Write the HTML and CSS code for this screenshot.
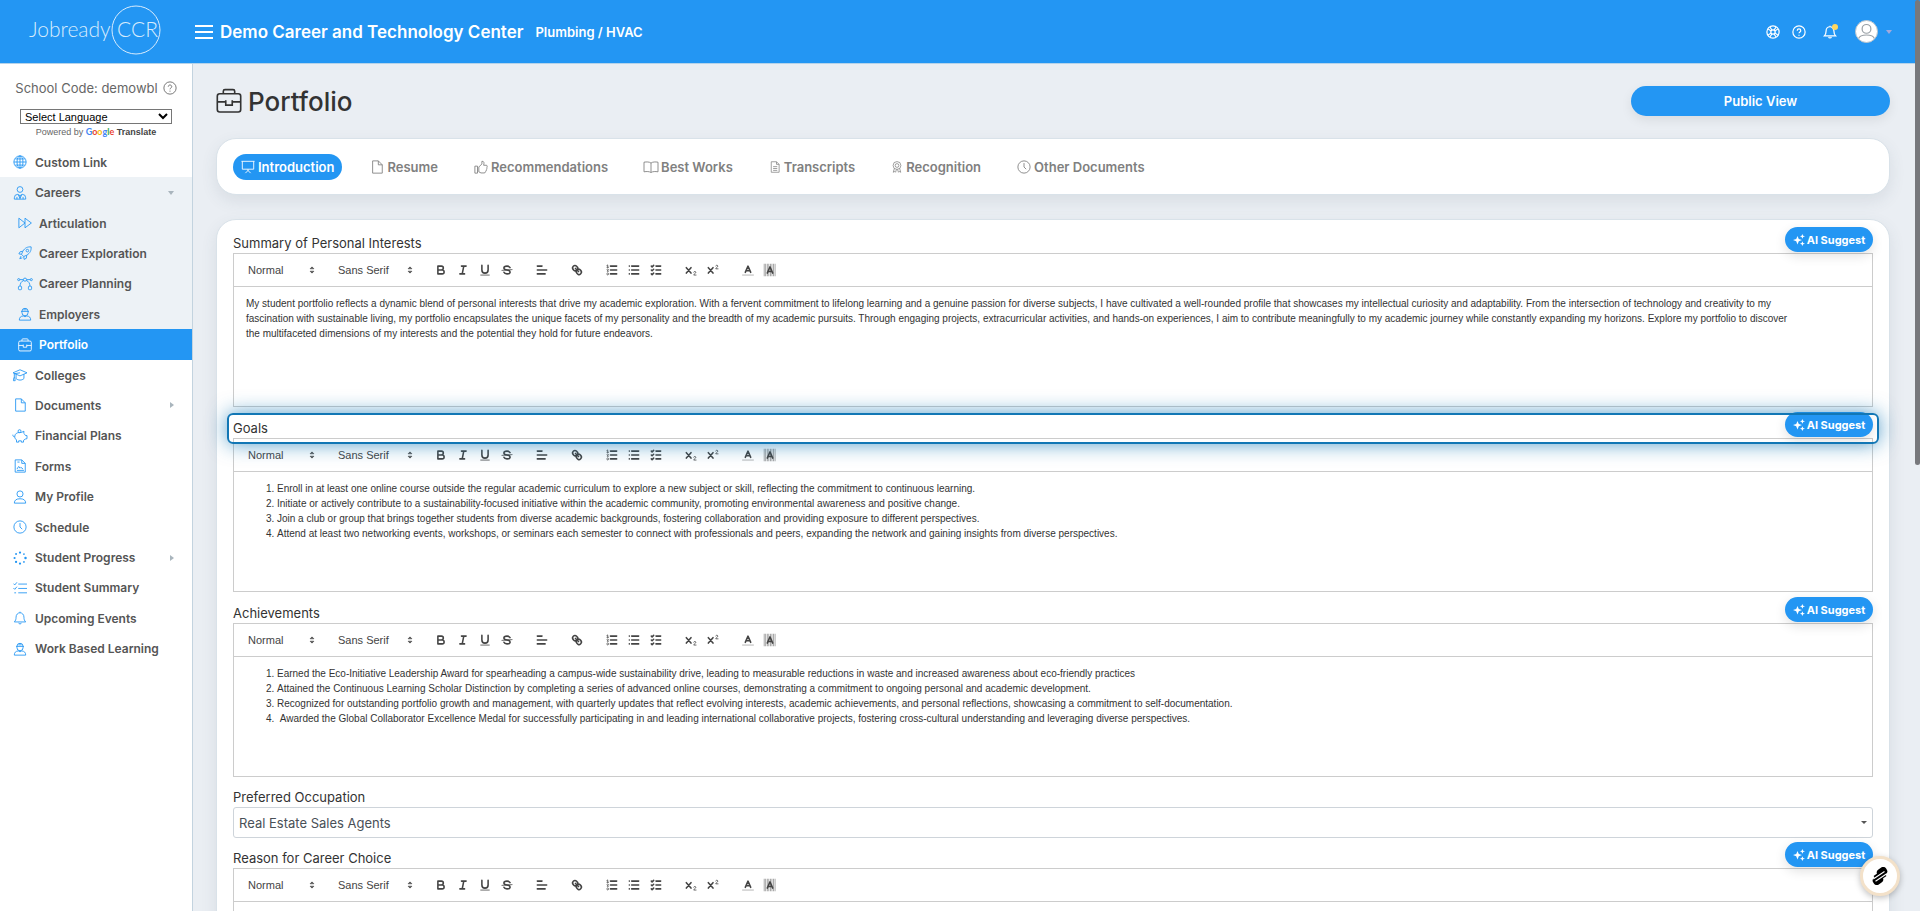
FILE: index.html
```
<!DOCTYPE html>
<html lang="en">
<head>
  <meta charset="utf-8">
  <title>Portfolio - JobreadyCCR</title>
  <link rel="stylesheet" href="styles.css">
</head>
<body>

<!-- icon sprite -->
<svg class="sprite" aria-hidden="true">
  <symbol id="i-globe" viewBox="0 0 16 16"><circle cx="8" cy="8" r="7"/><ellipse cx="8" cy="8" rx="3.4" ry="7"/><path d="M1 8h14M8 1v14M2.500 4.500h11M2.500 11.500h11"/></symbol>
  <symbol id="i-career" viewBox="0 0 16 16"><circle cx="8" cy="4" r="3.3"/><path d="M1.5 15v-1.5a4 4 0 0 1 4-4L8 11l2.500-1.500a4 4 0 0 1 4 4V15zM6 10l2 4 2-4M4.500 12.500V15M11.500 12.500V15M8 11v4"/></symbol>
  <symbol id="i-forward" viewBox="0 0 16 16"><path d="M1 2.500 8 8l-7 5.500zM8 2.500 15.300 8 8 13.500z"/></symbol>
  <symbol id="i-rocket" viewBox="0 0 16 16"><path d="M15 1c-4-.3-7 1-9.500 5L4 9.500 6.500 12l3.500-1.500C14 8 15.300 5 15 1zM5.500 6 2.500 6.500 1 9l3 .5M10 10.500 9.500 14 7 15.300 6.500 12M3.500 11.500l-1.500 3 3-1"/><circle cx="10.700" cy="5.300" r="1.500"/></symbol>
  <symbol id="i-curve" viewBox="0 0 18 16"><circle cx="1.800" cy="3" r="1.200"/><circle cx="16.200" cy="3" r="1.200"/><circle cx="9" cy="3" r="1.800"/><path d="M3 3h4M11 3h4M7.500 4C4.500 5 3.500 7.500 3.300 10.500M10.500 4c3 1 4 3.500 4.200 6.500"/><rect x="1.500" y="10.500" width="3.600" height="4" rx="1"/><rect x="12.900" y="10.500" width="3.600" height="4" rx="1"/></symbol>
  <symbol id="i-worker" viewBox="0 0 16 16"><path d="M3.500 5h9M4.500 5a3.500 3.500 0 0 1 7 0v1.500a3.500 3.500 0 0 1-7 0zM7 1.500V4M9 1.500V4M1.500 15c0-3 1.500-4.500 4.500-4.800l2 1 2-1c3 .3 4.500 1.800 4.500 4.800z"/></symbol>
  <symbol id="i-briefcase" viewBox="0 0 16 16"><rect x=".8" y="3.500" width="14.400" height="11.300" rx="1.500"/><path d="M4.500 3.500V2A1 1 0 0 1 5.500 1h5a1 1 0 0 1 1 1v1.500M.8 8.500H6M10 8.500h5.200M6 7.500v3h4v-3"/></symbol>
  <symbol id="i-grad" viewBox="0 0 18 16"><path d="M1 5.500 9 2l8 3.500L9 9zM4.500 7v5c2 2.400 7 2.400 9 0V7M9 5.500 2.500 6.500V11M1.500 14.500l.5-3.500h1l.5 3.500z"/></symbol>
  <symbol id="i-file" viewBox="0 0 16 16"><path d="M3 1h6.500L14 5.500V15H3zM9.500 1v4.500H14"/></symbol>
  <symbol id="i-pig" viewBox="0 0 18 16"><path d="M3.500 6.500C5 4 7.500 3.800 10.500 4L13.500 2.500l-.2 2.500c1 .8 1.500 1.500 2 2.500H17v3.500l-2 .5-2 1.500v2h-2.500V13.500h-3V15H5v-2.500C3 11 2.500 9 3.500 6.500zM3 9C1.500 9 .8 8 .8 6.500"/><circle cx="8.500" cy="2.500" r="1.700"/></symbol>
  <symbol id="i-form" viewBox="0 0 16 16"><path d="M2.500 1h7.500L14 5v10H2.500zM10 1v4h4M5 3.500h2.500M4.500 11.500l2-3 1.500 2 1-1 2.500 2M4.500 13h8"/></symbol>
  <symbol id="i-user" viewBox="0 0 16 16"><circle cx="8" cy="4.500" r="3.500"/><path d="M1.500 15c0-3.500 2.500-5 6.500-5s6.500 1.500 6.500 5z"/></symbol>
  <symbol id="i-clock" viewBox="0 0 16 16"><circle cx="8" cy="8" r="7"/><path d="M8 3.500V8l2.500 2.500"/></symbol>
  <symbol id="i-dots" viewBox="0 0 16 16"><g fill="currentColor" stroke="none"><circle cx="8" cy="1.800" r="1.300"/><circle cx="12.500" cy="3.500" r="1"/><circle cx="14.300" cy="8" r="1.400"/><circle cx="12.500" cy="12.500" r="1"/><circle cx="8" cy="14.300" r="1.300"/><circle cx="3.500" cy="12.500" r="1.300"/><circle cx="1.800" cy="8" r="1.200"/><circle cx="3.500" cy="3.500" r="1.100"/></g></symbol>
  <symbol id="i-tasks" viewBox="0 0 16 16"><path d="M6 3.500h10M6 8.500h10M6 13.500h10M.5 3 2 4.500 4.500 1.500M.5 8 2 9.500 4.500 6.500M1.500 13.500h2"/></symbol>
  <symbol id="i-bell" viewBox="0 0 16 16"><path d="M1.500 12.500C3 11 3.500 9.500 3.500 7a4.500 5 0 0 1 9 0c0 2.500.5 4 2 5.500zM6.500 13.500c.3 1.800 2.700 1.800 3 0M8 2V.8"/></symbol>
  <symbol id="i-help" viewBox="0 0 16 16"><circle cx="8" cy="8" r="7"/><path d="M6 6.500c0-2.600 4-2.600 4 0C10 8 8 7.800 8 9.500M8 11v1.200"/></symbol>
  <symbol id="i-ring" viewBox="0 0 16 16"><circle cx="8" cy="8" r="7"/><circle cx="8" cy="8" r="2.500"/><path d="M2.500 4.500 6 7M4.500 2.500 7 6M13.500 4.500 10 7M11.500 2.500 9 6M2.500 11.500 6 9M4.500 13.500 7 10M13.500 11.500 10 9M11.500 13.500 9 10"/></symbol>
  <symbol id="i-board" viewBox="0 0 16 16"><path d="M.5 1.500h15M1.500 1.500v9h13v-9M8 10.500v2M8 12l-3 3M8 12l3 3"/></symbol>
  <symbol id="i-thumb" viewBox="0 0 16 16"><path d="M1 7h3v8H1zM5.500 8 9 4.500V1.500C11.500 1 11.800 3.500 11 6h3.500c1 1.500.5 2.500 0 3 .5 1 0 2-.5 2.300.2 1-.2 1.800-.8 2 0 1-.7 1.500-1.700 1.500H8L5.500 13.500z"/></symbol>
  <symbol id="i-book" viewBox="0 0 18 16"><path d="M9 3.500C7 2 4 2 1 2.500V13.500C4 13 7 13 9 14.300c2-1.300 5-1.300 8-.8V2.500C14 2 11 2 9 3.500zV14"/></symbol>
  <symbol id="i-doc" viewBox="0 0 16 16"><path d="M3 1h7l3.500 3.500V15H3zM10 1v3.500h3.500M5.500 7.500h5.500M5.500 10h5.500M5.500 12.500h5.500"/></symbol>
  <symbol id="i-badge" viewBox="0 0 16 16"><circle cx="8" cy="6" r="5.200"/><circle cx="8" cy="6" r="2.500"/><path d="M4.500 10 3 15l2-1 1 1 1.300-3.800M11.500 10l1.500 5-2-1-1 1-1.300-3.800"/></symbol>
  <symbol id="i-spark" viewBox="0 0 16 16"><path fill="currentColor" stroke="none" d="M6 2.500l1.700 4L12 8l-4.300 1.700L6 14 4.300 9.700 0 8l4.300-1.500zM12.500 0l1 2.200 2.500.8-2.500.9-1 2.400-1-2.400L9.300 3l2.200-.8zM12.500 9.700l1 2.300 2.500.9-2.500.8-1 2.300-1-2.300-2.200-.8 2.200-.9z"/></symbol>

  <!-- editor toolbar -->
  <symbol id="e-updown" viewBox="0 0 18 18"><path fill="currentColor" d="M7 11l2 2 2-2zM7 7l2-2 2 2z"/></symbol>
  <symbol id="e-bold" viewBox="0 0 18 18"><path d="M5 4h4.500a2.500 2.500 0 0 1 0 5H5zM5 9h5.500a2.500 2.500 0 0 1 0 5H5z"/></symbol>
  <symbol id="e-italic" viewBox="0 0 18 18"><path d="M7 4h6M5 14h6M8 14l2-10"/></symbol>
  <symbol id="e-under" viewBox="0 0 18 18"><path d="M5 3v6a4 4 0 0 0 8 0V3"/><rect x="3" y="15" width="12" height="1" fill="currentColor" stroke="none"/></symbol>
  <symbol id="e-strike" viewBox="0 0 18 18"><path stroke-width="1" d="M15.500 8.500l-13 1"/><path d="M12.900 6C12.400 4.900 11 4 9 4 6.800 4 5 5.100 5 6.500 5 8 6.500 8.800 9 9s4 1 4 2.500S11.200 14 9 14s-3.500-.9-3.900-2"/></symbol>
  <symbol id="e-align" viewBox="0 0 18 18"><path d="M3 9h12M3 14h10M3 4h6"/></symbol>
  <symbol id="e-link" viewBox="0 0 18 18"><path d="M7 7l4 4M8.900 4.577a3.476 3.476 0 0 1 .36 4.679A3.476 3.476 0 0 1 4.577 8.900C3.185 7.500 2.035 6.400 4.217 4.217S7.500 3.185 8.900 4.577zM13.423 9.100a3.476 3.476 0 0 0-4.679-.36 3.476 3.476 0 0 0 .36 4.679c1.392 1.392 2.500 2.542 4.679.36S14.815 10.500 13.423 9.100z"/></symbol>
  <symbol id="e-ol" viewBox="0 0 18 18"><path d="M7 4h8M7 9h8M7 14h8"/><path stroke-width="1" d="M2.500 3l1-.5v3M2.500 5.500h2M4.500 10.500h-2c0-.2 1.850-1.100 1.850-2.200a1 1 0 0 0-1.850-.1M2.500 14.800a1 1 0 0 0 1.850-.1c0-.4-.3-.7-.6-.7.3 0 .6-.3.600-.7a1 1 0 0 0-1.850-.1"/></symbol>
  <symbol id="e-ul" viewBox="0 0 18 18"><path d="M6 4h9M6 9h9M6 14h9M3 4h.01M3 9h.01M3 14h.01"/></symbol>
  <symbol id="e-check" viewBox="0 0 18 18"><path d="M9 4h6M9 9h6M9 14h6M3 4l1 1 2-2M3 9l1 1 2-2M3 14l1 1 2-2"/></symbol>
  <symbol id="e-sub" viewBox="0 0 18 18"><path d="M3 6l6 7M9 6l-6 7"/><path stroke-width="1" d="M12.500 11.800c.2-1.400 2.700-1.300 2.700.2 0 1.600-2.700 2-2.700 3.500h3"/></symbol>
  <symbol id="e-sup" viewBox="0 0 18 18"><path d="M3 6l6 7M9 6l-6 7"/><path stroke-width="1" d="M12.500 3.800c.2-1.400 2.700-1.300 2.700.2 0 1.600-2.700 2-2.700 3.500h3"/></symbol>
  <symbol id="e-color" viewBox="0 0 18 18"><path stroke-width="1" opacity=".5" d="M2 15.500h14"/><path d="M5.500 12 9 4l3.500 8M11.600 10H6.400"/></symbol>
  <symbol id="e-back" viewBox="0 0 18 18"><path stroke-width="16" stroke-linecap="butt" stroke-dasharray="1 1" opacity=".6" d="M1 9h16"/><path d="M5.500 13 9 5l3.500 8M11.600 11H6.400"/></symbol>
</svg>

<header class="topbar">
  <a class="logo" href="#" aria-label="JobreadyCCR">
    <svg width="140" height="56" viewBox="0 0 140 56">
      <text x="4" y="33">Jobready</text>
      <circle cx="111" cy="26" r="24"/>
      <text x="92" y="33">CCR</text>
    </svg>
  </a>
  <button class="burger" type="button" aria-label="Menu"><i></i><i></i><i></i></button>
  <span class="school">Demo Career and Technology Center</span>
  <span class="program">Plumbing / HVAC</span>
  <div class="tools">
    <button type="button" aria-label="Support"><svg class="icon"><use href="#i-ring"/></svg></button>
    <button type="button" aria-label="Help"><svg class="icon"><use href="#i-help"/></svg></button>
    <button class="notify" type="button" aria-label="Notifications"><svg class="icon"><use href="#i-bell"/></svg></button>
    <button class="account" type="button" aria-label="Account"><span class="avatar"><svg viewBox="0 0 24 24"><circle cx="12" cy="9" r="5"/><path d="M3 20c1-3 4-4 9-4s8 1 9 4"/></svg></span><span class="caret"></span></button>
  </div>
</header>

<div class="layout">
  <aside class="sidebar">
    <div class="code">School Code: demowbl <svg class="icon"><use href="#i-help"/></svg></div>
    <div class="translate">
      <select aria-label="Select Language"><option>Select Language</option></select>
      <p>Powered by <span class="google"><span class="g1">G</span><span class="g2">o</span><span class="g3">o</span><span class="g1">g</span><span class="g4">l</span><span class="g2">e</span></span> <a href="#">Translate</a></p>
    </div>
    <nav class="menu">
      <a href="#"><svg class="icon"><use href="#i-globe"/></svg>Custom Link</a>
      <a href="#" class="open"><svg class="icon"><use href="#i-career"/></svg>Careers<span class="arrow down"></span></a>
      <a href="#" class="open sub"><svg class="icon"><use href="#i-forward"/></svg>Articulation</a>
      <a href="#" class="open sub"><svg class="icon"><use href="#i-rocket"/></svg>Career Exploration</a>
      <a href="#" class="open sub"><svg class="icon wide"><use href="#i-curve"/></svg>Career Planning</a>
      <a href="#" class="open sub"><svg class="icon"><use href="#i-worker"/></svg>Employers</a>
      <a href="#" class="active sub"><svg class="icon"><use href="#i-briefcase"/></svg>Portfolio</a>
      <a href="#"><svg class="icon wide"><use href="#i-grad"/></svg>Colleges</a>
      <a href="#"><svg class="icon"><use href="#i-file"/></svg>Documents<span class="arrow"></span></a>
      <a href="#"><svg class="icon wide"><use href="#i-pig"/></svg>Financial Plans</a>
      <a href="#"><svg class="icon"><use href="#i-form"/></svg>Forms</a>
      <a href="#"><svg class="icon"><use href="#i-user"/></svg>My Profile</a>
      <a href="#"><svg class="icon"><use href="#i-clock"/></svg>Schedule</a>
      <a href="#"><svg class="icon"><use href="#i-dots"/></svg>Student Progress<span class="arrow"></span></a>
      <a href="#"><svg class="icon"><use href="#i-tasks"/></svg>Student Summary</a>
      <a href="#"><svg class="icon"><use href="#i-bell"/></svg>Upcoming Events</a>
      <a href="#"><svg class="icon"><use href="#i-worker"/></svg>Work Based Learning</a>
    </nav>
  </aside>

  <main class="content">
    <div class="page-head">
      <svg class="icon"><use href="#i-briefcase"/></svg>
      <h1>Portfolio</h1>
      <button class="public" type="button">Public View</button>
    </div>

    <nav class="card tabs">
      <a href="#" class="on"><svg class="icon"><use href="#i-board"/></svg>Introduction</a>
      <a href="#"><svg class="icon"><use href="#i-file"/></svg>Resume</a>
      <a href="#"><svg class="icon"><use href="#i-thumb"/></svg>Recommendations</a>
      <a href="#"><svg class="icon wide"><use href="#i-book"/></svg>Best Works</a>
      <a href="#"><svg class="icon slim"><use href="#i-doc"/></svg>Transcripts</a>
      <a href="#"><svg class="icon slim"><use href="#i-badge"/></svg>Recognition</a>
      <a href="#"><svg class="icon"><use href="#i-clock"/></svg>Other Documents</a>
    </nav>

    <div class="card form">
      <section class="field">
        <div class="field-head"><h2>Summary of Personal Interests</h2><button class="ai" type="button"><svg class="icon"><use href="#i-spark"/></svg>AI Suggest</button></div>
        <div class="toolbar">
          <span class="picker head"><select aria-label="Heading"><option>Normal</option></select><svg><use href="#e-updown"/></svg></span>
          <span class="picker font"><select aria-label="Font"><option>Sans Serif</option></select><svg><use href="#e-updown"/></svg></span>
          <span class="group"><button aria-label="Bold"><svg><use href="#e-bold"/></svg></button><button aria-label="Italic"><svg><use href="#e-italic"/></svg></button><button aria-label="Underline"><svg><use href="#e-under"/></svg></button><button aria-label="Strike"><svg><use href="#e-strike"/></svg></button></span>
          <span class="group"><button aria-label="Align"><svg><use href="#e-align"/></svg></button></span>
          <span class="group"><button aria-label="Link"><svg><use href="#e-link"/></svg></button></span>
          <span class="group"><button aria-label="Ordered list"><svg><use href="#e-ol"/></svg></button><button aria-label="Bullet list"><svg><use href="#e-ul"/></svg></button><button aria-label="Check list"><svg><use href="#e-check"/></svg></button></span>
          <span class="group"><button aria-label="Subscript"><svg><use href="#e-sub"/></svg></button><button aria-label="Superscript"><svg><use href="#e-sup"/></svg></button></span>
          <span class="group"><button aria-label="Color"><svg><use href="#e-color"/></svg></button><button aria-label="Background"><svg><use href="#e-back"/></svg></button></span>
        </div>
        <div class="editor" contenteditable="true" spellcheck="false">
          <p>My student portfolio reflects a dynamic blend of personal interests that drive my academic exploration. With a fervent commitment to lifelong learning and a genuine passion for diverse subjects, I have cultivated a well-rounded profile that showcases my intellectual curiosity and adaptability. From the intersection of technology and creativity to my<br>
          fascination with sustainable living, my portfolio encapsulates the unique facets of my personality and the breadth of my academic pursuits. Through engaging projects, extracurricular activities, and hands-on experiences, I aim to contribute meaningfully to my academic journey while constantly expanding my horizons. Explore my portfolio to discover<br>
          the multifaceted dimensions of my interests and the potential they hold for future endeavors.</p>
        </div>
      </section>

      <section class="field">
        <div class="field-head focus"><h2>Goals</h2><button class="ai" type="button"><svg class="icon"><use href="#i-spark"/></svg>AI Suggest</button></div>
        <div class="toolbar">
          <span class="picker head"><select aria-label="Heading"><option>Normal</option></select><svg><use href="#e-updown"/></svg></span>
          <span class="picker font"><select aria-label="Font"><option>Sans Serif</option></select><svg><use href="#e-updown"/></svg></span>
          <span class="group"><button aria-label="Bold"><svg><use href="#e-bold"/></svg></button><button aria-label="Italic"><svg><use href="#e-italic"/></svg></button><button aria-label="Underline"><svg><use href="#e-under"/></svg></button><button aria-label="Strike"><svg><use href="#e-strike"/></svg></button></span>
          <span class="group"><button aria-label="Align"><svg><use href="#e-align"/></svg></button></span>
          <span class="group"><button aria-label="Link"><svg><use href="#e-link"/></svg></button></span>
          <span class="group"><button aria-label="Ordered list"><svg><use href="#e-ol"/></svg></button><button aria-label="Bullet list"><svg><use href="#e-ul"/></svg></button><button aria-label="Check list"><svg><use href="#e-check"/></svg></button></span>
          <span class="group"><button aria-label="Subscript"><svg><use href="#e-sub"/></svg></button><button aria-label="Superscript"><svg><use href="#e-sup"/></svg></button></span>
          <span class="group"><button aria-label="Color"><svg><use href="#e-color"/></svg></button><button aria-label="Background"><svg><use href="#e-back"/></svg></button></span>
        </div>
        <div class="editor" contenteditable="true" spellcheck="false">
          <ol>
            <li>Enroll in at least one online course outside the regular academic curriculum to explore a new subject or skill, reflecting the commitment to continuous learning.</li>
            <li>Initiate or actively contribute to a sustainability-focused initiative within the academic community, promoting environmental awareness and positive change.</li>
            <li>Join a club or group that brings together students from diverse academic backgrounds, fostering collaboration and providing exposure to different perspectives.</li>
            <li>Attend at least two networking events, workshops, or seminars each semester to connect with professionals and peers, expanding the network and gaining insights from diverse perspectives.</li>
          </ol>
        </div>
      </section>

      <section class="field">
        <div class="field-head"><h2>Achievements</h2><button class="ai" type="button"><svg class="icon"><use href="#i-spark"/></svg>AI Suggest</button></div>
        <div class="toolbar">
          <span class="picker head"><select aria-label="Heading"><option>Normal</option></select><svg><use href="#e-updown"/></svg></span>
          <span class="picker font"><select aria-label="Font"><option>Sans Serif</option></select><svg><use href="#e-updown"/></svg></span>
          <span class="group"><button aria-label="Bold"><svg><use href="#e-bold"/></svg></button><button aria-label="Italic"><svg><use href="#e-italic"/></svg></button><button aria-label="Underline"><svg><use href="#e-under"/></svg></button><button aria-label="Strike"><svg><use href="#e-strike"/></svg></button></span>
          <span class="group"><button aria-label="Align"><svg><use href="#e-align"/></svg></button></span>
          <span class="group"><button aria-label="Link"><svg><use href="#e-link"/></svg></button></span>
          <span class="group"><button aria-label="Ordered list"><svg><use href="#e-ol"/></svg></button><button aria-label="Bullet list"><svg><use href="#e-ul"/></svg></button><button aria-label="Check list"><svg><use href="#e-check"/></svg></button></span>
          <span class="group"><button aria-label="Subscript"><svg><use href="#e-sub"/></svg></button><button aria-label="Superscript"><svg><use href="#e-sup"/></svg></button></span>
          <span class="group"><button aria-label="Color"><svg><use href="#e-color"/></svg></button><button aria-label="Background"><svg><use href="#e-back"/></svg></button></span>
        </div>
        <div class="editor" contenteditable="true" spellcheck="false">
          <ol>
            <li>Earned the Eco-Initiative Leadership Award for spearheading a campus-wide sustainability drive, leading to measurable reductions in waste and increased awareness about eco-friendly practices</li>
            <li>Attained the Continuous Learning Scholar Distinction by completing a series of advanced online courses, demonstrating a commitment to ongoing personal and academic development.</li>
            <li>Recognized for outstanding portfolio growth and management, with quarterly updates that reflect evolving interests, academic achievements, and personal reflections, showcasing a commitment to self-documentation.</li>
            <li>&nbsp;Awarded the Global Collaborator Excellence Medal for successfully participating in and leading international collaborative projects, fostering cross-cultural understanding and leveraging diverse perspectives.</li>
          </ol>
        </div>
      </section>

      <section class="field">
        <div class="field-head plain"><label for="occupation">Preferred Occupation</label></div>
        <div class="choice">
          <select id="occupation"><option>Real Estate Sales Agents</option></select>
          <span class="caret"></span>
        </div>
      </section>

      <section class="field">
        <div class="field-head plain"><h2>Reason for Career Choice</h2><button class="ai" type="button"><svg class="icon"><use href="#i-spark"/></svg>AI Suggest</button></div>
        <div class="toolbar">
          <span class="picker head"><select aria-label="Heading"><option>Normal</option></select><svg><use href="#e-updown"/></svg></span>
          <span class="picker font"><select aria-label="Font"><option>Sans Serif</option></select><svg><use href="#e-updown"/></svg></span>
          <span class="group"><button aria-label="Bold"><svg><use href="#e-bold"/></svg></button><button aria-label="Italic"><svg><use href="#e-italic"/></svg></button><button aria-label="Underline"><svg><use href="#e-under"/></svg></button><button aria-label="Strike"><svg><use href="#e-strike"/></svg></button></span>
          <span class="group"><button aria-label="Align"><svg><use href="#e-align"/></svg></button></span>
          <span class="group"><button aria-label="Link"><svg><use href="#e-link"/></svg></button></span>
          <span class="group"><button aria-label="Ordered list"><svg><use href="#e-ol"/></svg></button><button aria-label="Bullet list"><svg><use href="#e-ul"/></svg></button><button aria-label="Check list"><svg><use href="#e-check"/></svg></button></span>
          <span class="group"><button aria-label="Subscript"><svg><use href="#e-sub"/></svg></button><button aria-label="Superscript"><svg><use href="#e-sup"/></svg></button></span>
          <span class="group"><button aria-label="Color"><svg><use href="#e-color"/></svg></button><button aria-label="Background"><svg><use href="#e-back"/></svg></button></span>
        </div>
        <div class="editor" contenteditable="true" spellcheck="false"></div>
      </section>
    </div>
  </main>
</div>

<div class="scrollbar"></div>
<button class="float" type="button" aria-label="Assistant">
  <svg viewBox="0 0 24 24"><g fill="#000"><rect x="8" y="1" width="14" height="11" rx="5" transform="rotate(-35 15 7)"/><rect x="2" y="12" width="14" height="11" rx="5" transform="rotate(-35 9 17)"/><rect x="5" y="7" width="14" height="10" transform="rotate(-35 12 12)"/></g><path d="M3 16 18 6M6 19 21 9" stroke="#fff" stroke-width="1.500" fill="none"/></svg>
</button>

</body>
</html>
```
FILE: styles.css
```
* { box-sizing: border-box; }

html, body { height: 100%; }

body {
  margin: 0;
  background: #eaeef3;
  color: #333;
  font-family: Inter, "Open Sans", sans-serif;
  font-size: 13px;
  overflow: hidden;
  display: flex;
  flex-direction: column;
}

a { color: inherit; text-decoration: none; }

button {
  border: 0;
  padding: 0;
  background: none;
  color: inherit;
  font: inherit;
  cursor: pointer;
}

.sprite { display: none; }

.icon {
  width: 14px;
  height: 14px;
  flex: none;
  fill: none;
  stroke: currentColor;
  stroke-width: 1;
}

/* top bar */
.topbar {
  display: flex;
  align-items: center;
  flex: none;
  height: 64px;
  padding-right: 28px;
  background: #2396f3;
  border-bottom: 1px solid #b5d3ea;
  color: #fff;
}

.logo {
  width: 195px;
  padding-left: 25px;
  height: 56px;
}

.logo text {
  fill: #d8ecfd;
  font-family: Lato, sans-serif;
  font-weight: 300;
  font-size: 21px;
}

.logo circle { fill: none; stroke: #d8ecfd; stroke-width: 1; }

.burger {
  display: grid;
  gap: 4px;
  width: 18px;
  margin-right: 7px;
}

.burger i { height: 2px; background: #fff; }

.school { font-size: 17px; font-weight: 600; }

.program {
  margin-left: 12px;
  font-size: 13px;
  font-weight: 600;
}

.tools {
  display: flex;
  align-items: center;
  margin-left: auto;
}

.tools button { display: flex; align-items: center; margin-left: 12px; }

.tools .icon { stroke-width: 1.4; }

.tools .notify { position: relative; margin-left: 17px; }

.notify::after {
  content: "";
  position: absolute;
  top: -1px;
  right: -1px;
  width: 6px;
  height: 6px;
  border-radius: 50%;
  background: #ffd75e;
}

.tools .account { margin-left: 18px; gap: 8px; }

.avatar {
  width: 23px;
  height: 23px;
  border-radius: 50%;
  background: #fff;
  border: 1px solid #b9c3cb;
  overflow: hidden;
}

.avatar svg { display: block; fill: none; stroke: #9aa1a7; stroke-width: 1.4; }

.caret {
  border: 3px solid transparent;
  border-top: 4px solid #a3a9dc;
  border-bottom: 0;
}

/* sidebar */
.layout { display: flex; flex: 1; min-height: 0; }

.sidebar {
  flex: none;
  width: 193px;
  background: #fff;
  border-right: 1px solid #c3d3df;
}

.code {
  display: flex;
  justify-content: center;
  align-items: center;
  gap: 5px;
  margin-top: 14px;
  height: 20px;
  color: #666;
}

.translate {
  margin: 11px 20px 0;
  font-family: "Liberation Sans", Arial, sans-serif;
}

.translate select {
  display: block;
  width: 100%;
  height: 15px;
  padding: 0;
  border: 1px solid #767676;
  border-radius: 0;
  background: #fff;
  color: #000;
  font: 11px "Liberation Sans", Arial, sans-serif;
}

.translate p {
  margin: 2px 0 0;
  font-size: 9px;
  line-height: 12px;
  text-align: center;
  color: #666;
}

.translate a { font-weight: bold; color: #444; }

.google { font-family: Lato, sans-serif; font-weight: 700; }
.g1 { color: #4285f4; }
.g2 { color: #ea4335; }
.g3 { color: #fbbc05; }
.g4 { color: #34a853; }

.menu {
  display: grid;
  grid-auto-rows: 1fr;
  height: 517px;
  margin-top: 9px;
}

.menu a {
  display: flex;
  align-items: center;
  gap: 8px;
  padding: 0 18px 0 13px;
  color: #555;
  font-size: 12px;
  font-weight: 600;
}

.menu .icon { color: #2396f3; }
.icon.wide { width: 16px; margin: 0 -1px; }
.menu .sub { padding-left: 18px; gap: 7px; }
.menu .open { background: #edf2f6; }
.menu .active { background: #2396f3; color: #fff; }
.menu .active .icon { color: #fff; }

.arrow {
  margin-left: auto;
  border: 3px solid transparent;
  border-left: 4px solid #a9b5bd;
  border-right: 0;
}

.arrow.down {
  border: 3px solid transparent;
  border-top: 4px solid #a9b5bd;
  border-bottom: 0;
}

/* page */
.content { flex: 1; min-width: 0; padding: 22px 30px 0 23px; }

.page-head { display: flex; align-items: center; height: 30px; gap: 6px; }
.page-head .icon { width: 26px; height: 26px; }

h1 {
  margin: 0 auto 0 0;
  font-size: 26px;
  font-weight: 500;
}

.public {
  width: 259px;
  height: 30px;
  border-radius: 15px;
  background: #2396f3;
  box-shadow: 0 4px 12px rgba(0, 0, 0, .08);
  color: #fff;
  font-weight: 600;
}

.card {
  background: #fff;
  border: 1px solid #d9e2e9;
  border-radius: 20px;
  box-shadow: 0 6px 16px rgba(60, 80, 100, .1);
}

.tabs {
  display: flex;
  align-items: center;
  gap: 20px;
  height: 57px;
  margin-top: 22px;
  padding: 0 16px;
}

.tabs a {
  display: flex;
  align-items: center;
  gap: 3px;
  height: 26px;
  padding: 0 8px;
  border-radius: 13px;
  color: #808080;
  font-weight: 600;
}

.tabs .slim { width: 12px; }
.tabs .on { background: #2396f3; color: #fff; }

.form { margin-top: 24px; padding: 2px 16px; }

.field-head {
  display: flex;
  align-items: flex-end;
  height: 31px;
  position: relative;
}

.field-head.plain { height: 30px; }

.field-head h2, .field-head label {
  margin: 0 auto 0 0;
  font-size: 13px;
  font-weight: 400;
  line-height: 20px;
}

.ai {
  display: flex;
  align-items: center;
  justify-content: center;
  gap: 2px;
  width: 88px;
  height: 25px;
  margin-bottom: 1px;
  border-radius: 13px;
  background: #2396f3;
  box-shadow: 0 4px 12px rgba(0, 0, 0, .12);
  color: #fff;
  font-size: 11px;
  font-weight: 700;
}

.ai .icon { width: 12px; height: 12px; }

/* outline around the section that the tour points at */
.focus::after {
  content: "";
  position: absolute;
  inset: 6px -6px -6px;
  border: 2px solid #1277b5;
  border-radius: 6px;
  box-shadow: 0 0 20px rgba(18, 119, 181, .7);
  pointer-events: none;
}

.toolbar {
  display: flex;
  align-items: center;
  height: 34px;
  padding: 0 8px;
  border: 1px solid #ccc;
  color: #444;
}

.toolbar svg {
  width: 14px;
  height: 14px;
  fill: none;
  stroke: currentColor;
  stroke-width: 2;
  stroke-linecap: round;
  stroke-linejoin: round;
}

.picker {
  display: grid;
  align-items: center;
  margin-right: 13px;
}

.picker select, .picker svg { grid-area: 1 / 1; }
.picker svg { justify-self: end; pointer-events: none; stroke-width: 1; }
.head { width: 77px; }
.font { width: 85px; }

.picker select, .choice select {
  appearance: none;
  width: 100%;
  border: 0;
  background: none;
  color: inherit;
}

.picker select {
  padding: 0 0 0 6px;
  font: 11px "Liberation Sans", Arial, sans-serif;
}

.group { display: flex; margin-right: 13px; }

.group button {
  display: flex;
  justify-content: center;
  align-items: center;
  width: 22px;
  height: 20px;
}

.editor {
  height: 120px;
  padding: 9px 12px;
  border: 1px solid #ccc;
  border-top: 0;
  outline: 0;
  color: #333;
  font: 10px/15px "Liberation Sans", Arial, sans-serif;
}

.editor p, .editor ol { margin: 0; }
.editor ol { padding-left: 31px; }

.choice {
  display: grid;
  align-items: center;
  height: 31px;
  border: 1px solid #ced4da;
  border-radius: 3px;
}

.choice select {
  grid-area: 1 / 1;
  padding: 0 5px;
  height: 29px;
  color: #495057;
  font: 13px Inter, sans-serif;
}

.choice .caret {
  grid-area: 1 / 1;
  justify-self: end;
  margin-right: 5px;
  border-top: 3px solid #555;
  border-bottom: 0;
  pointer-events: none;
}

/* floating parts */
.scrollbar {
  position: fixed;
  top: 0;
  right: 0;
  width: 5px;
  height: 51%;
  border-radius: 3px;
  background: #77787c;
}

.float {
  position: fixed;
  right: 20px;
  bottom: 15px;
  width: 40px;
  height: 40px;
  border: 3px solid #f3e1c9;
  border-radius: 50%;
  background: #fff;
  box-shadow: 0 2px 6px rgba(0, 0, 0, .25);
}

.float svg { display: block; width: 18px; height: 18px; margin: auto; }
```
